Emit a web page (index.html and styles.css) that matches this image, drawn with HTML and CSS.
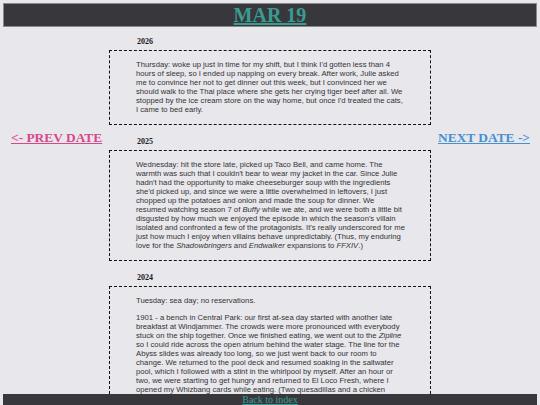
FILE: index.html
```html
<!DOCTYPE html>
<html lang="en">
<head>
<meta charset="utf-8">
<title>Mar 19</title>
<link rel="stylesheet" href="styles.css">
</head>
<body>
<header class="top-bar">
  <h1 class="day-title"><a href="#">MAR 19</a></h1>
</header>

<div class="layout">
  <nav class="side side-prev"><a class="date-link prev" href="#">&lt;- PREV DATE</a></nav>

  <main class="entries">
    <section class="entry">
      <h2 class="year">2026</h2>
      <div class="entry-body">
        <p>Thursday: woke up just in time for my shift, but I think I'd gotten less than 4 hours of sleep, so I ended up napping on every break. After work, Julie asked me to convince her not to get dinner out this week, but I convinced her we should walk to the Thai place where she gets her crying tiger beef after all. We stopped by the ice cream store on the way home, but once I'd treated the cats, I came to bed early.</p>
      </div>
    </section>

    <section class="entry">
      <h2 class="year">2025</h2>
      <div class="entry-body">
        <p>Wednesday: hit the store late, picked up Taco Bell, and came home. The warmth was such that I couldn't bear to wear my jacket in the car. Since Julie hadn't had the opportunity to make cheeseburger soup with the ingredients she'd picked up, and since we were a little overwhelmed in leftovers, I just chopped up the potatoes and onion and made the soup for dinner. We resumed watching season 7 of <em>Buffy</em> while we ate, and we were both a little bit disgusted by how much we enjoyed the episode in which the season's villain isolated and confronted a few of the protagonists. It's really underscored for me just how much I enjoy when villains behave unpredictably. (Thus, my enduring love for the <em>Shadowbringers</em> and <em>Endwalker</em> expansions to <em>FFXIV</em>.)</p>
      </div>
    </section>

    <section class="entry">
      <h2 class="year">2024</h2>
      <div class="entry-body">
        <p>Tuesday: sea day; no reservations.</p>
        <p>1901 - a bench in Central Park: our first at-sea day started with another late breakfast at Windjammer. The crowds were more pronounced with everybody stuck on the ship together. Once we finished eating, we went out to the <em>Zipline</em> so I could ride across the open atrium behind the water stage. The line for the Abyss slides was already too long, so we just went back to our room to change. We returned to the pool deck and resumed soaking in the saltwater pool, which I followed with a stint in the whirlpool by myself. After an hour or two, we were starting to get hungry and returned to El Loco Fresh, where I opened my Whizbang cards while eating. (Two quesadillas and a chicken bowl.)</p>
      </div>
    </section>
  </main>

  <nav class="side side-next"><a class="date-link next" href="#">NEXT DATE -&gt;</a></nav>
</div>

<footer class="bottom-bar">
  <a href="#">Back to index</a>
</footer>
</body>
</html>
```

FILE: styles.css
```css
html, body {
  background: #e8e7ec;
}

body {
  margin: 3px;
  font-family: "Liberation Serif", "Times New Roman", serif;
  color: #222;
}

/* title bar */
.top-bar {
  background: #38383c;
  border: 1px solid #8a8a8e;
  height: 22px;
  display: flex;
  justify-content: center;
  align-items: flex-start;
}

.day-title {
  margin: 0;
  font-size: 20px;
  line-height: 22px;
  font-weight: bold;
}

.day-title a,
.bottom-bar a {
  color: #3a9b91;
}

/* three columns: prev link, entries, next link */
.layout {
  display: grid;
  grid-template-columns: 1fr 322px 1fr;
  padding-bottom: 20px;
}

.side {
  padding-top: 101px;
}

.side-prev {
  justify-self: start;
  padding-left: 8px;
}

.side-next {
  justify-self: end;
  padding-right: 7px;
}

.date-link {
  font-size: 13.4px;
  font-weight: bold;
  line-height: 15px;
  white-space: nowrap;
}

.date-link.prev { color: #d6488a; }
.date-link.next { color: #4590d0; }

.entries {
  padding-top: 10px;
}

.entry {
  margin-bottom: 12px;
}

.year {
  margin: 0 0 4px 28px;
  font-size: 8px;
  line-height: 9px;
  font-weight: bold;
  color: #1a1a1a;
}

.entry-body {
  border: 1px dashed #111;
  padding: 1px 24px 2px 26px;
  font-family: "Liberation Sans", Arial, sans-serif;
  font-size: 7.7px;
  line-height: 9px;
  color: #333;
}

.entry-body p {
  margin: 8px 0;
}

/* pinned index link */
.bottom-bar {
  position: fixed;
  left: 3px;
  right: 3px;
  bottom: 0;
  height: 11px;
  background: #38383c;
  text-align: center;
  font-size: 10px;
  line-height: 12px;
}
```
